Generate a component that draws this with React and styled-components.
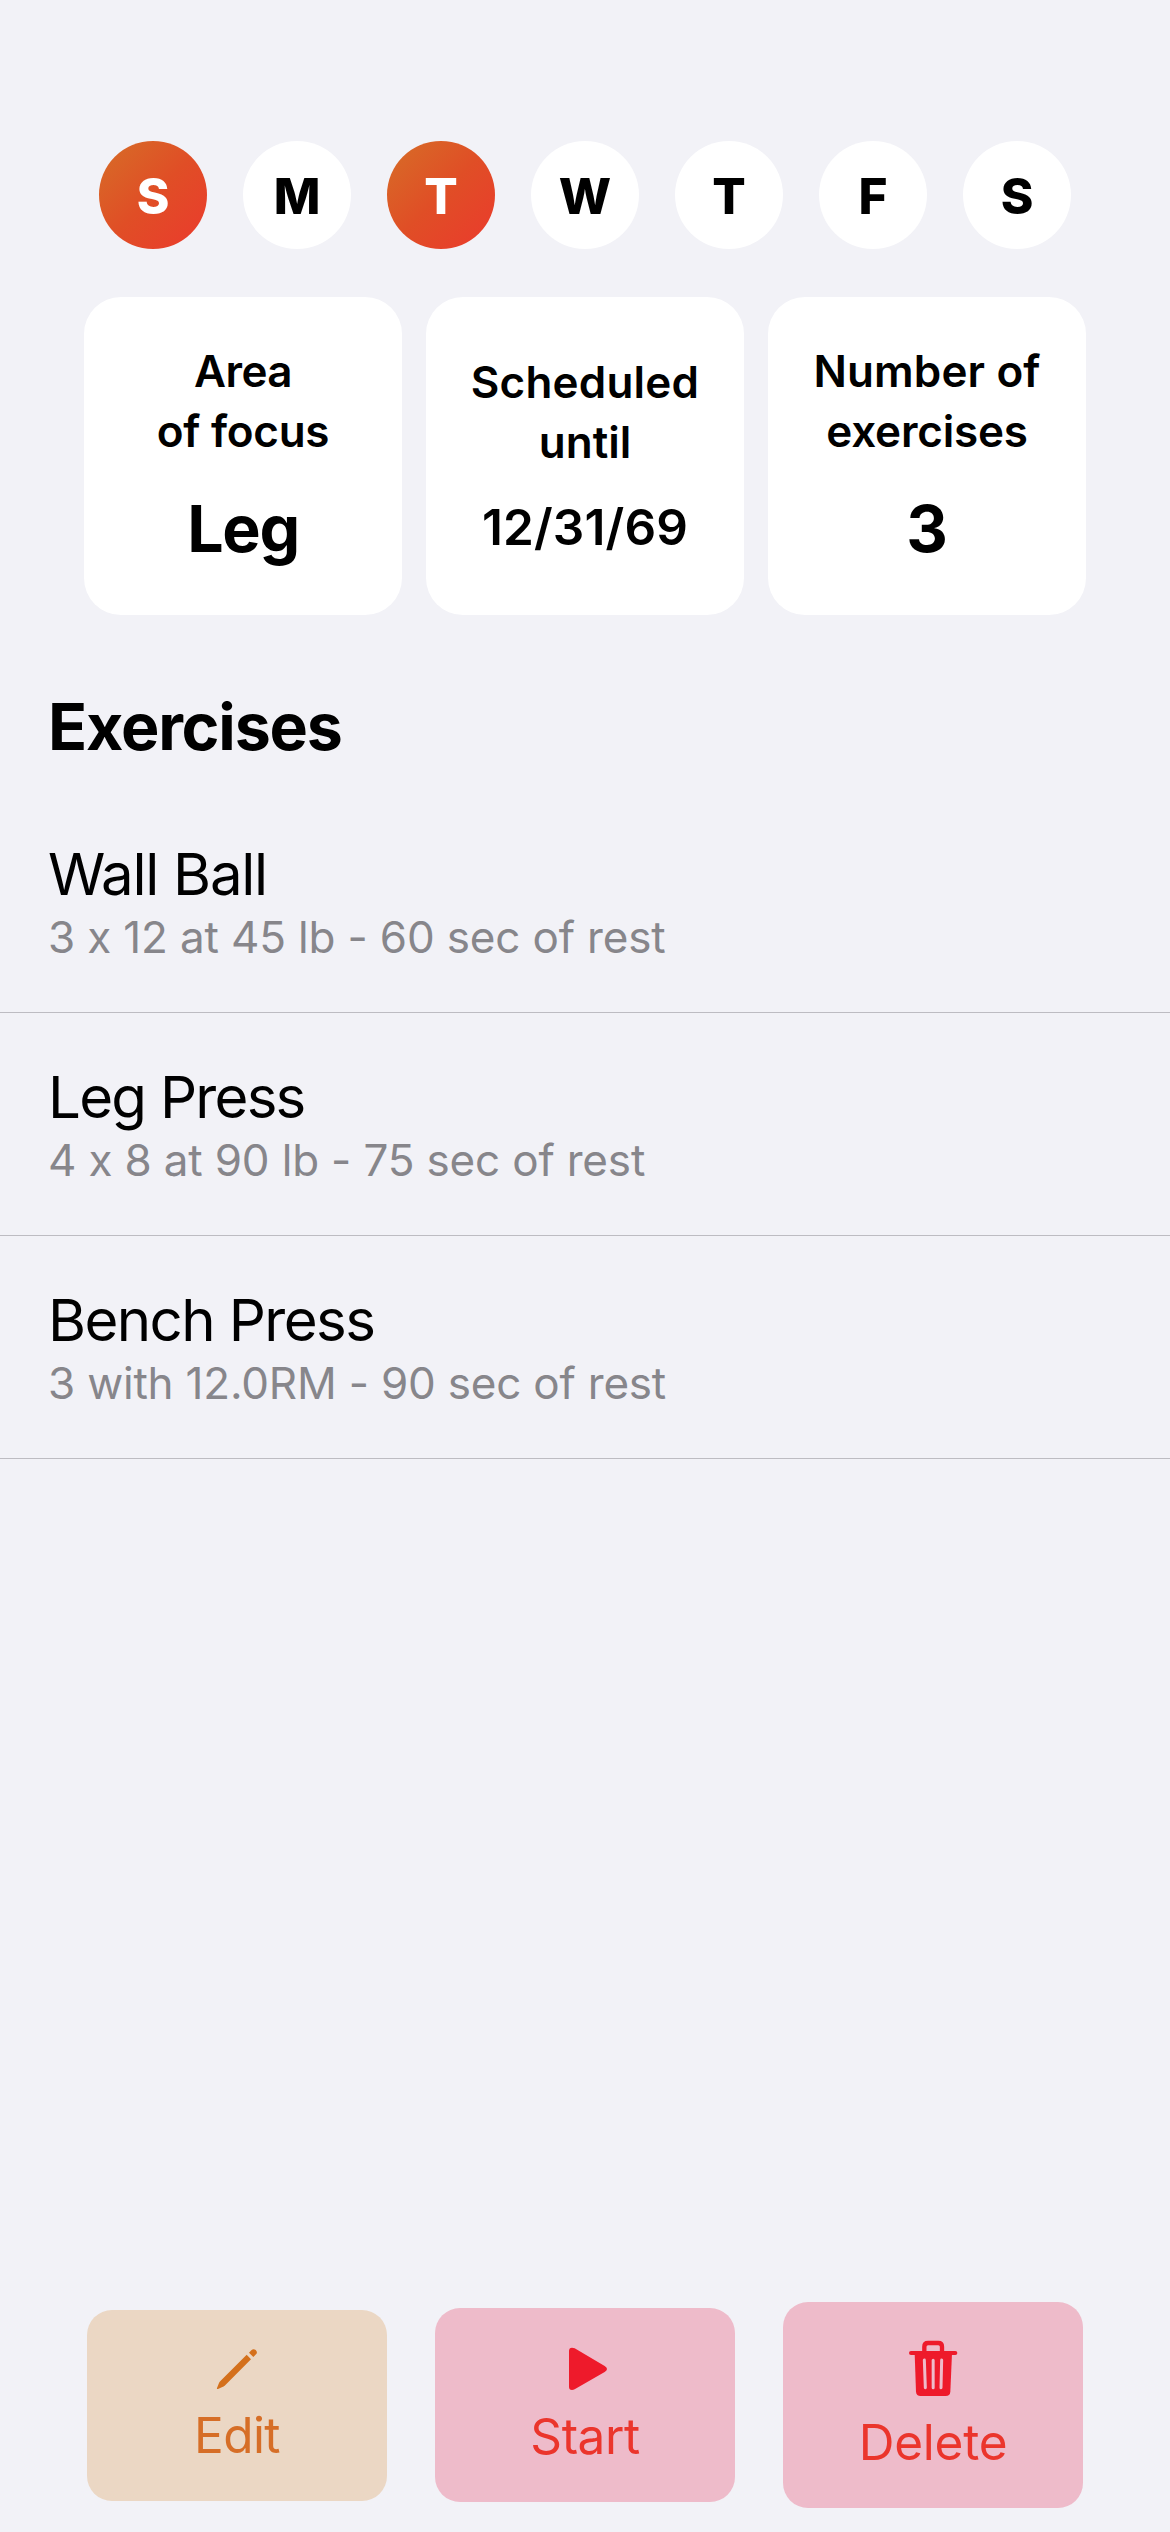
import React from "react";
import styled, { createGlobalStyle } from "styled-components";

const GlobalStyle = createGlobalStyle`
  *, *::before, *::after { box-sizing: border-box; }
  body {
    margin: 0;
    background: #f2f2f7;
    color: #000;
    font-family: Inter, "Liberation Sans", sans-serif;
    font-feature-settings: "calt" 0;
  }
`;

const Screen = styled.main`
  width: 1170px;
  height: 2532px;
  padding: 141px 0 24px;
  display: flex;
  flex-direction: column;
  overflow: hidden;
  background: #f2f2f7;
`;

const Week = styled.div`
  display: flex;
  justify-content: center;
  gap: 36px;
`;

const Day = styled.div`
  width: 108px;
  height: 108px;
  padding-top: 1px;
  display: flex;
  align-items: center;
  justify-content: center;
  border-radius: 50%;
  font-size: 49.5px;
  font-weight: 800;
  color: ${(p) => (p.$active ? "#fff" : "#000")};
  background: ${(p) =>
    p.$active ? "linear-gradient(135deg, #d66e27 0%, #e04e26 50%, #eb3a2d 100%)" : "#fff"};
`;

const Cards = styled.section`
  margin-top: 48px;
  display: flex;
  justify-content: center;
  gap: 24px;
`;

const Card = styled.article`
  width: 318px;
  height: 318px;
  display: flex;
  flex-direction: column;
  align-items: center;
  justify-content: center;
  border-radius: 37px;
  background: #fff;
`;

const CardLine = styled.div`
  font-size: 44px;
  font-weight: 600;
  line-height: 60px;
  letter-spacing: ${(p) => p.$track || 0}px;
  white-space: nowrap;
`;

const CardValue = styled.div`
  margin-top: ${(p) => (p.$compact ? 22 : 26)}px;
  font-size: ${(p) => (p.$compact ? 49.5 : 64.5)}px;
  font-weight: ${(p) => (p.$compact ? 600 : 700)};
  line-height: ${(p) => (p.$compact ? 66 : 84)}px;
  letter-spacing: ${(p) => p.$track || 0}px;
`;

const Heading = styled.h1`
  margin: 70px 0 21px;
  padding: 0 48px;
  font-size: 64.5px;
  font-weight: 700;
  line-height: 84px;
  letter-spacing: -1.2px;
`;

const List = styled.ul`
  margin: 0;
  padding: 0;
  list-style: none;
`;

const Row = styled.li`
  height: 223px;
  padding: 48px;
  border-bottom: 1px solid #bdbcc2;
`;

const Name = styled.div`
  font-size: 58.2px;
  line-height: 72px;
  letter-spacing: ${(p) => p.$track}px;
`;

const Detail = styled.div`
  font-size: 44px;
  line-height: 54px;
  letter-spacing: ${(p) => p.$track}px;
  color: #87868b;
`;

const Actions = styled.footer`
  margin-top: auto;
  display: flex;
  justify-content: center;
  align-items: center;
  gap: 48px;
`;

const ActionButton = styled.button`
  width: 300px;
  padding: 36px 0;
  display: flex;
  flex-direction: column;
  align-items: center;
  gap: 16px;
  border: 0;
  border-radius: 25px;
  font-family: inherit;
  font-feature-settings: inherit;
  font-size: 49.5px;
  line-height: 60px;
  letter-spacing: ${(p) => p.$track}px;
  color: ${(p) => (p.$tone === "orange" ? "#d66e27" : "#eb352c")};
  background: ${(p) => (p.$tone === "orange" ? "#ebd7c4" : "#eebbca")};

  svg {
    display: block;
    flex: none;
  }
`;

const PencilIcon = () => (
  <svg width="44" height="43" viewBox="435 168 132 129" fill="#d4701c">
    <path d="M530 194 L543 208 L464 287 Q461 290 457 291 L444 297 Q440 298 441 294 L447 279 Q449 275 452 272 Z" />
    <path d="M537 188 L544 181 Q550 175 557 180 Q564 187 558 193 L550 201 Z" />
  </svg>
);

const PlayIcon = () => (
  <svg width="44" height="46" viewBox="429 162 132 138" fill="#ee1a2b">
    <path d="M447 183 Q447 173 456 173 Q460 173 464 175 L554 228 Q561 232 561 237 Q561 242 554 246 L464 298 Q460 300 456 300 Q447 300 447 291 Z" />
  </svg>
);

const TrashIcon = () => (
  <svg width="50" height="58" viewBox="414 144 150 174" fill="none" strokeLinecap="round">
    <path d="M463 188 V170 Q463 159 474 159 H505 Q516 159 516 170 V188" stroke="#ee1a2b" strokeWidth="13" strokeLinecap="butt" />
    <path d="M423 189 H556" stroke="#ee1a2b" strokeWidth="12" />
    <path d="M434 190 H546 L541 305 Q540 318 527 318 H452 Q439 318 438 305 Z" fill="#ee1a2b" />
    <path d="M463 210 L466 293 M489.500 211 V293 M515 210 L513 293" stroke="#eebbca" strokeWidth="9" />
  </svg>
);

const week = [
  ["S", true],
  ["M", false],
  ["T", true],
  ["W", false],
  ["T", false],
  ["F", false],
  ["S", false],
];

const exercises = [
  { name: "Wall Ball", nameTrack: -1.3, detail: "3 x 12 at 45 lb - 60 sec of rest", track: -0.16 },
  { name: "Leg Press", nameTrack: -1.75, detail: "4 x 8 at 90 lb - 75 sec of rest", track: -0.17 },
  { name: "Bench Press", nameTrack: -1.6, detail: "3 with 12.0RM - 90 sec of rest", track: -0.2 },
];

export default function App() {
  return (
    <>
      <GlobalStyle />
      <Screen>
        <Week>
          {week.map(([label, active], i) => (
            <Day key={i} $active={active}>{label}</Day>
          ))}
        </Week>

        <Cards>
          <Card>
            <CardLine $track={-0.6}>Area</CardLine>
            <CardLine $track={-0.25}>of focus</CardLine>
            <CardValue $track={-1.3}>Leg</CardValue>
          </Card>
          <Card>
            <CardLine $track={0.2}>Scheduled</CardLine>
            <CardLine>until</CardLine>
            <CardValue $compact $track={0.15}>12/31/69</CardValue>
          </Card>
          <Card>
            <CardLine $track={0.15}>Number of</CardLine>
            <CardLine $track={-0.2}>exercises</CardLine>
            <CardValue>3</CardValue>
          </Card>
        </Cards>

        <Heading>Exercises</Heading>
        <List>
          {exercises.map((item) => (
            <Row key={item.name}>
              <Name $track={item.nameTrack}>{item.name}</Name>
              <Detail $track={item.track}>{item.detail}</Detail>
            </Row>
          ))}
        </List>

        <Actions>
          <ActionButton $tone="orange" $track={-0.55}>
            <PencilIcon />
            Edit
          </ActionButton>
          <ActionButton $tone="red" $track={-0.45}>
            <PlayIcon />
            Start
          </ActionButton>
          <ActionButton $tone="red" $track={-0.25}>
            <TrashIcon />
            Delete
          </ActionButton>
        </Actions>
      </Screen>
    </>
  );
}
